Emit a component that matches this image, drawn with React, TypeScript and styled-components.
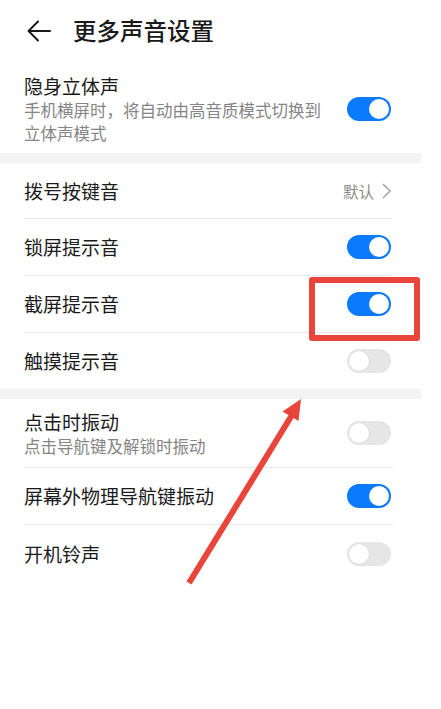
import React from "react";
import styled, { createGlobalStyle } from "styled-components";

const Global = createGlobalStyle`
  html, body {
    margin: 0;
    padding: 0;
    background: #ffffff;
  }
  body {
    font-family: "Noto Sans CJK SC", "Noto Sans", sans-serif;
    color: #1a1a1a;
  }
`;

const Page = styled.div`
  position: relative;
  width: 421px;
  min-height: 709px;
  background: #ffffff;
`;

const Header = styled.header`
  display: flex;
  align-items: center;
  height: 60px;
  padding-left: 26px;
  gap: 21px;
`;

const BackIcon = styled.svg`
  width: 26px;
  height: 26px;
  margin-top: 1px;
`;

const Title = styled.h1`
  margin: 0;
  font-size: 23.5px;
  font-weight: 500;
  line-height: 30px;
  color: #1a1a1a;
`;

const Section = styled.section`
  display: flex;
  flex-direction: column;
`;

const Band = styled.div`
  height: 10px;
  background: #f3f3f3;
`;

const Row = styled.div<{ $h?: number; $last?: boolean }>`
  display: flex;
  align-items: center;
  justify-content: space-between;
  min-height: ${(p) => p.$h ?? 56}px;
  margin: 0 28px 0 24px;
  border-bottom: ${(p) => (p.$last ? "none" : "1px solid #e8e8e8")};
  box-sizing: border-box;
  gap: 16px;
`;

const Texts = styled.div`
  display: flex;
  flex-direction: column;
  flex: 1;
`;

const Label = styled.div`
  font-size: 19px;
  line-height: 26px;
  color: #1a1a1a;
`;

const Sub = styled.div`
  font-size: 16.5px;
  line-height: 22.5px;
  color: #858585;
  white-space: nowrap;
`;

const Value = styled.div`
  display: flex;
  align-items: center;
  gap: 8px;
  font-size: 15.5px;
  color: #8a8a8a;
  margin-right: 2px;
`;

const Track = styled.div<{ $on: boolean }>`
  position: relative;
  flex: none;
  width: 44px;
  height: 24px;
  border-radius: 12px;
  margin-right: 2px;
  background: ${(p) => (p.$on ? "#0a7bff" : "#e6e6e6")};
`;

const Knob = styled.div<{ $on: boolean }>`
  position: absolute;
  top: 2px;
  left: ${(p) => (p.$on ? "22px" : "2px")};
  width: 20px;
  height: 20px;
  border-radius: 50%;
  background: #ffffff;
  box-shadow: ${(p) => (p.$on ? "none" : "0 0 0 0.5px #d6d6d6")};
`;

const Highlight = styled.div`
  position: absolute;
  left: 309px;
  top: 277px;
  width: 111px;
  height: 64px;
  box-sizing: border-box;
  border: 6px solid #e8463b;
  border-radius: 3px;
  pointer-events: none;
`;

const Pointer = styled.svg`
  position: absolute;
  left: 0;
  top: 0;
  width: 421px;
  height: 709px;
  pointer-events: none;
`;

const Switch = ({ on }: { on: boolean }) => (
  <Track $on={on}>
    <Knob $on={on} />
  </Track>
);

type Item = { label: string; sub?: string; on?: boolean; value?: string; h?: number };

const SettingRow = ({ item, last }: { item: Item; last?: boolean }) => (
  <Row $h={item.h} $last={last}>
    <Texts>
      <Label>{item.label}</Label>
      {item.sub && <Sub>{item.sub}</Sub>}
    </Texts>
    {item.value !== undefined ? (
      <Value>
        {item.value}
        <svg width="9" height="16" viewBox="0 0 9 16">
          <polyline points="1,1 8,8 1,15" fill="none" stroke="#9a9a9a" strokeWidth="1.3" />
        </svg>
      </Value>
    ) : (
      <Switch on={!!item.on} />
    )}
  </Row>
);

const groupA: Item[] = [
  { label: "拨号按键音", value: "默认", h: 56 },
  { label: "锁屏提示音", on: true, h: 57 },
  { label: "截屏提示音", on: true, h: 57 },
  { label: "触摸提示音", on: false, h: 56 },
];

const groupB: Item[] = [
  { label: "点击时振动", sub: "点击导航键及解锁时振动", on: false, h: 69 },
  { label: "屏幕外物理导航键振动", on: true, h: 57 },
  { label: "开机铃声", on: false, h: 57 },
];

const StereoRow = styled(Row)`
  padding: 13px 0 9px;
  align-items: center;
`;

export default function App() {
  return (
    <>
      <Global />
      <Page>
        <Header>
          <BackIcon viewBox="0 0 26 26">
            <path
              d="M24 13H3M12 3.5L2.5 13l9.5 9.5"
              fill="none"
              stroke="#1a1a1a"
              strokeWidth="2"
              strokeLinecap="round"
              strokeLinejoin="round"
            />
          </BackIcon>
          <Title>更多声音设置</Title>
        </Header>

        <Section>
          <StereoRow $last>
            <Texts>
              <Label>隐身立体声</Label>
              <Sub>
                手机横屏时，将自动由高音质模式切换到
                <br />
                立体声模式
              </Sub>
            </Texts>
            <Switch on />
          </StereoRow>
        </Section>
        <Band />

        <Section>
          {groupA.map((it, i) => (
            <SettingRow key={it.label} item={it} last={i === groupA.length - 1} />
          ))}
        </Section>
        <Band />

        <Section>
          {groupB.map((it, i) => (
            <SettingRow key={it.label} item={it} last={i === groupB.length - 1} />
          ))}
        </Section>

        <Highlight />
        <Pointer viewBox="0 0 421 709">
          <line x1="189" y1="583" x2="292" y2="415" stroke="#e8463b" strokeWidth="6" />
          <polygon points="301,399 298.5,421 282.5,411.5" fill="#e8463b" />
        </Pointer>
      </Page>
    </>
  );
}
